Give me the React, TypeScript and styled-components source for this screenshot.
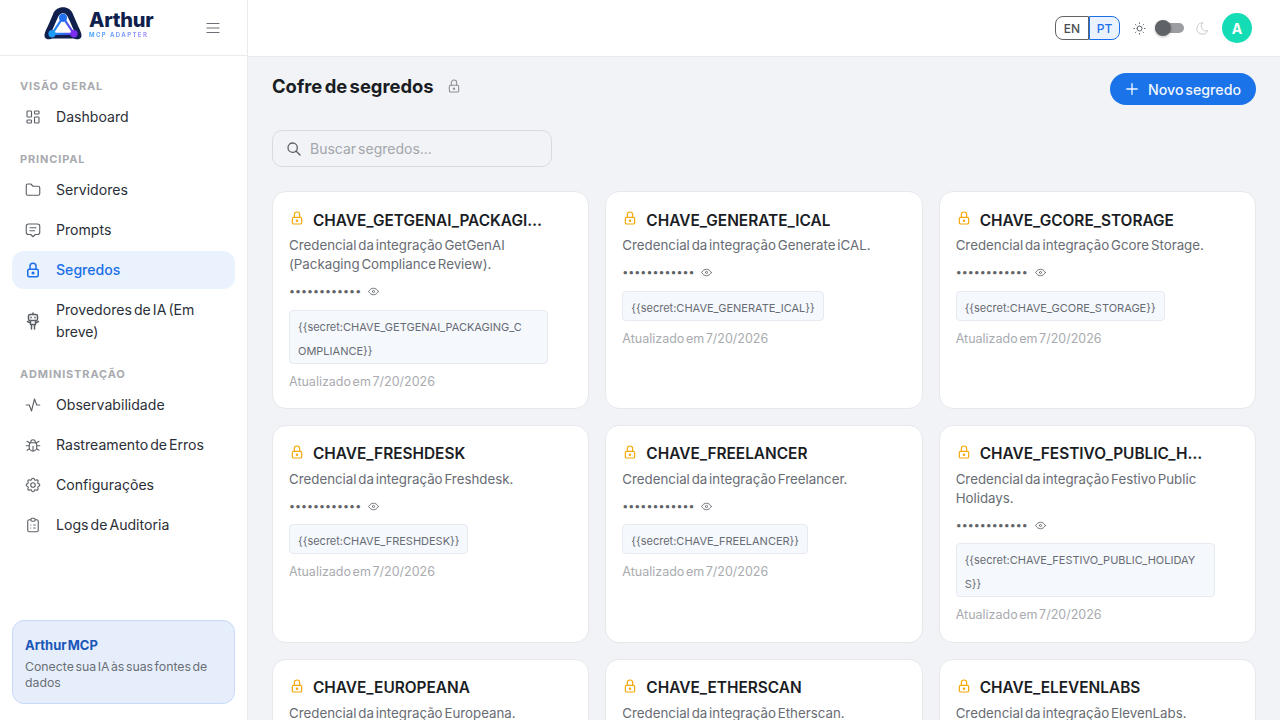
import styled, { createGlobalStyle } from 'styled-components';
import {
  TbActivity,
  TbBug,
  TbClipboardList,
  TbEye,
  TbFolder,
  TbLayoutDashboard,
  TbLock,
  TbMenu2,
  TbMessage2,
  TbMoon,
  TbPlus,
  TbSearch,
  TbSettings,
  TbSun,
} from 'react-icons/tb';

const GlobalStyle = createGlobalStyle`
  html, body {
    margin: 0;
    height: 100%;
    overflow: hidden;
  }
  body {
    font-family: Inter, "Noto Sans", sans-serif;
    word-spacing: -0.12em;
    color: #1f2430;
  }
  * {
    box-sizing: border-box;
  }
`;

// the tabler robot has no limbs, this one is drawn to match
const RobotIcon = () => (
  <svg width="18" height="18" viewBox="0 0 18 18" fill="none" stroke="currentColor" strokeWidth="1.3">
    <path d="M9 1v1.5" strokeLinecap="round" />
    <rect x="4.5" y="2.5" width="9" height="6" rx="1.6" />
    <path d="M7 5.2v.6M11 5.2v.6" strokeLinecap="round" />
    <path d="M6.5 8.5v4h5v-4M3.5 9.5l3 1.5M14.5 9.5l-3 1.5M7.5 12.5V17M10.5 12.5V17" strokeLinecap="round" />
  </svg>
);

const navGroups = [
  {
    title: 'VISÃO GERAL',
    items: [{ icon: <TbLayoutDashboard />, label: 'Dashboard' }],
  },
  {
    title: 'PRINCIPAL',
    items: [
      { icon: <TbFolder />, label: 'Servidores' },
      { icon: <TbMessage2 />, label: 'Prompts' },
      { icon: <TbLock />, label: 'Segredos', active: true },
      { icon: <RobotIcon />, label: 'Provedores de IA (Em breve)' },
    ],
  },
  {
    title: 'ADMINISTRAÇÃO',
    items: [
      { icon: <TbActivity />, label: 'Observabilidade' },
      { icon: <TbBug />, label: 'Rastreamento de Erros' },
      { icon: <TbSettings />, label: 'Configurações' },
      { icon: <TbClipboardList />, label: 'Logs de Auditoria' },
    ],
  },
];

const secrets = [
  { name: 'CHAVE_GETGENAI_PACKAGING_COMPLIANCE', desc: 'Credencial da integração GetGenAI (Packaging Compliance Review).' },
  { name: 'CHAVE_GENERATE_ICAL', desc: 'Credencial da integração Generate iCAL.' },
  { name: 'CHAVE_GCORE_STORAGE', desc: 'Credencial da integração Gcore Storage.' },
  { name: 'CHAVE_FRESHDESK', desc: 'Credencial da integração Freshdesk.' },
  { name: 'CHAVE_FREELANCER', desc: 'Credencial da integração Freelancer.' },
  { name: 'CHAVE_FESTIVO_PUBLIC_HOLIDAYS', desc: 'Credencial da integração Festivo Public Holidays.' },
  { name: 'CHAVE_EUROPEANA', desc: 'Credencial da integração Europeana.' },
  { name: 'CHAVE_ETHERSCAN', desc: 'Credencial da integração Etherscan.' },
  { name: 'CHAVE_ELEVENLABS', desc: 'Credencial da integração ElevenLabs.' },
];

const Logo = () => (
  <svg width="38" height="33" viewBox="0 0 38 32" fill="none" preserveAspectRatio="none">
    <defs>
      <linearGradient id="tri" x1="6" y1="24" x2="32" y2="24" gradientUnits="userSpaceOnUse">
        <stop offset="0" stopColor="#1e9bf5" />
        <stop offset="0.5" stopColor="#2f6df0" />
        <stop offset="1" stopColor="#7c2df0" />
      </linearGradient>
    </defs>
    <path
      d="M0.5 28 C0.5 24 3 21 5 16 L9 7 C12 -2 26 -2 29 7 L33 16 C35 21 37.500 24 37.500 28 C37.500 31.500 32 32 29.500 30.500 L8.500 30.500 C6 32 0.500 31.500 0.500 28Z"
      fill="#101f4d"
    />
    <path d="M19 6 C15.500 6 14.500 9 12.500 13 L8 23 L30 23 L25.500 13 C23.500 9 22.500 6 19 6Z" fill="#fff" />
    <path d="M19 10 L8 26 L30 26Z" stroke="url(#tri)" strokeWidth="2.2" fill="#fff" strokeLinejoin="round" />
    <circle cx="19" cy="10.5" r="4" fill="#2170f2" />
    <circle cx="8" cy="26" r="3.6" fill="#1e9bf5" />
    <circle cx="30" cy="26" r="3.6" fill="#7c2df0" />
  </svg>
);

const Sidebar = () => (
  <Side>
    <Brand>
      <BrandMark>
        <Logo />
        <BrandText>
          <BrandName>Arthur</BrandName>
          <BrandSub>MCP ADAPTER</BrandSub>
        </BrandText>
      </BrandMark>
      <MenuButton>
        <TbMenu2 />
      </MenuButton>
    </Brand>
    <Nav>
      {navGroups.map((group) => (
        <div key={group.title}>
          <GroupTitle>{group.title}</GroupTitle>
          {group.items.map((item) => (
            <NavItem key={item.label} $active={item.active}>
              <NavIcon $active={item.active}>{item.icon}</NavIcon>
              <span>{item.label}</span>
            </NavItem>
          ))}
        </div>
      ))}
    </Nav>
    <Promo>
      <PromoTitle>Arthur MCP</PromoTitle>
      <PromoText>Conecte sua IA às suas fontes de dados</PromoText>
    </Promo>
  </Side>
);

const SecretCard = ({ name, desc }: { name: string; desc: string }) => (
  <Card>
    <CardHead>
      <AmberLock>
        <TbLock />
      </AmberLock>
      <CardTitle>{name}</CardTitle>
    </CardHead>
    <CardDesc>{desc}</CardDesc>
    <MaskRow>
      <Dots>••••••••••••</Dots>
      <TbEye />
    </MaskRow>
    <Chip $long={name.length > 24}>{`{{secret:${name}}}`}</Chip>
    <Updated>Atualizado em 7/20/2026</Updated>
  </Card>
);

export default function App() {
  return (
    <>
      <GlobalStyle />
      <Shell>
        <Sidebar />
        <Body>
          <TopBar>
            <LangGroup>
              <LangButton>EN</LangButton>
              <LangButton $active>PT</LangButton>
            </LangGroup>
            <ThemeIcon>
              <TbSun />
            </ThemeIcon>
            <Toggle>
              <Thumb />
            </Toggle>
            <ThemeIcon $muted>
              <TbMoon />
            </ThemeIcon>
            <Avatar>A</Avatar>
          </TopBar>
          <Content>
            <PageHead>
              <PageTitle>
                Cofre de segredos
                <TitleIcon>
                  <TbLock />
                </TitleIcon>
              </PageTitle>
              <NewButton>
                <TbPlus />
                Novo segredo
              </NewButton>
            </PageHead>
            <SearchBox>
              <TbSearch />
              <SearchInput placeholder="Buscar segredos..." />
            </SearchBox>
            <Grid>
              {secrets.map((s) => (
                <SecretCard key={s.name} name={s.name} desc={s.desc} />
              ))}
            </Grid>
          </Content>
        </Body>
      </Shell>
    </>
  );
}

const Shell = styled.div`
  display: flex;
  height: 100vh;
  overflow: hidden;
`;

const Side = styled.aside`
  width: 248px;
  flex-shrink: 0;
  display: flex;
  flex-direction: column;
  background: #fff;
  border-right: 1px solid #e9ebef;
`;

const Brand = styled.div`
  height: 56px;
  flex-shrink: 0;
  display: flex;
  align-items: center;
  justify-content: space-between;
  padding: 0 25px 0 44px;
  border-bottom: 1px solid #e9ebef;
`;

const BrandMark = styled.div`
  display: flex;
  align-items: center;
  gap: 7px;
  margin-top: -8px;
`;

const BrandText = styled.div`
  display: flex;
  flex-direction: column;
`;

const BrandName = styled.div`
  font-size: 20px;
  line-height: 22px;
  font-weight: 800;
  color: #101f4d;
  letter-spacing: -0.2px;
`;

const BrandSub = styled.div`
  font-size: 6px;
  line-height: 7px;
  font-weight: 700;
  letter-spacing: 1.4px;
  word-spacing: 0;
  background: linear-gradient(90deg, #3ea2f7, #a78bfa);
  background-clip: text;
  -webkit-background-clip: text;
  color: transparent;
`;

const MenuButton = styled.div`
  display: flex;
  font-size: 18px;
  color: #6b6f76;

  svg {
    stroke-width: 1.6;
  }
`;

const Nav = styled.nav`
  padding: 9px 12px 0;
`;

const GroupTitle = styled.div`
  padding: 13px 8px 3px;
  height: 33px;
  font-size: 11px;
  line-height: 17px;
  font-weight: 700;
  letter-spacing: 0.85px;
  word-spacing: 0;
  color: #a8aaae;
`;

const NavItem = styled.div<{ $active?: boolean }>`
  display: flex;
  align-items: center;
  margin-bottom: 2px;
  padding: 8px 12px;
  border-radius: 12px;
  font-size: 14.1px;
  line-height: 22px;
  font-weight: ${(p) => (p.$active ? 500 : 400)};
  color: ${(p) => (p.$active ? '#1c6fe8' : '#2b2f38')};
  background: ${(p) => (p.$active ? '#eaf2fd' : 'transparent')};
`;

const NavIcon = styled.span<{ $active?: boolean }>`
  display: flex;
  flex-shrink: 0;
  width: 32px;
  font-size: 18px;
  color: ${(p) => (p.$active ? '#1c6fe8' : '#5c6066')};

  svg {
    stroke-width: ${(p) => (p.$active ? 2 : 1.5)};
  }
`;

const Promo = styled.div`
  margin: auto 12px 16px;
  padding: 14px 12px 12px;
  height: 84px;
  border: 1px solid #c9daf8;
  border-radius: 12px;
  background: #e6eefc;
`;

const PromoTitle = styled.div`
  font-size: 13px;
  line-height: 20px;
  font-weight: 700;
  color: #1a56b8;
`;

const PromoText = styled.div`
  margin-top: 4px;
  font-size: 12.3px;
  line-height: 16px;
  color: #6b6f76;
`;

const Body = styled.div`
  flex: 1;
  min-width: 0;
  display: flex;
  flex-direction: column;
  background: #f1f3f6;
`;

const TopBar = styled.header`
  height: 57px;
  flex-shrink: 0;
  display: flex;
  align-items: center;
  justify-content: flex-end;
  padding: 0 28px 0 0;
  background: #fff;
  border-bottom: 1px solid #e9ebef;
`;

const LangGroup = styled.div`
  display: flex;
  margin-right: 12px;
`;

const LangButton = styled.div<{ $active?: boolean }>`
  width: ${(p) => (p.$active ? '31px' : '34px')};
  height: 24px;
  display: flex;
  align-items: center;
  justify-content: center;
  font-size: 12px;
  font-weight: 500;
  color: ${(p) => (p.$active ? '#1c6fe8' : '#4a4e55')};
  background: ${(p) => (p.$active ? '#eaf2fd' : '#fff')};
  border: 1px solid ${(p) => (p.$active ? '#1c6fe8' : '#5f6368')};
  border-radius: ${(p) => (p.$active ? '0 8px 8px 0' : '8px 0 0 8px')};
`;

const ThemeIcon = styled.span<{ $muted?: boolean }>`
  display: flex;
  font-size: 15px;
  color: ${(p) => (p.$muted ? '#c9cbcf' : '#5f6368')};

  svg {
    stroke-width: 1.6;
  }
`;

const Toggle = styled.div`
  position: relative;
  width: 29px;
  height: 10px;
  margin: 0 11px 0 8px;
  border-radius: 5px;
  background: #9b9da1;
`;

const Thumb = styled.div`
  position: absolute;
  left: 0;
  top: -3px;
  width: 16px;
  height: 16px;
  border-radius: 50%;
  background: #5f6368;
  box-shadow: 0 1px 3px rgba(0, 0, 0, 0.25);
`;

const Avatar = styled.div`
  width: 30px;
  height: 30px;
  margin-left: 12px;
  display: flex;
  align-items: center;
  justify-content: center;
  border-radius: 50%;
  background: #14dcb4;
  color: #fff;
  font-size: 14px;
  font-weight: 700;
`;

const Content = styled.main`
  padding: 16px 24px 24px;
`;

const PageHead = styled.div`
  display: flex;
  justify-content: space-between;
  align-items: flex-start;
  height: 57px;
`;

const PageTitle = styled.h1`
  margin: 0;
  display: flex;
  align-items: center;
  height: 26px;
  font-size: 18.4px;
  font-weight: 700;
  color: #1a1d24;
`;

const TitleIcon = styled.span`
  display: flex;
  margin-left: 12px;
  font-size: 16px;
  color: #8c8f94;

  svg {
    stroke-width: 1.6;
  }
`;

const NewButton = styled.button`
  height: 32px;
  width: 146px;
  display: flex;
  align-items: center;
  gap: 7px;
  padding: 0 13px;
  border: none;
  border-radius: 16px;
  background: #1a73e8;
  color: #f1f6fe;
  font-family: inherit;
  font-size: 14.2px;
  font-weight: 500;
  word-spacing: inherit;

  svg {
    font-size: 18px;
    stroke-width: 1.8;
  }
`;

const SearchBox = styled.label`
  width: 280px;
  height: 37px;
  display: flex;
  align-items: center;
  gap: 8px;
  padding: 0 13px;
  border: 1px solid #d9dbdf;
  border-radius: 10px;
  color: #5f6368;
  font-size: 16px;

  svg {
    flex-shrink: 0;
  }
`;

const SearchInput = styled.input`
  flex: 1;
  min-width: 0;
  padding: 0;
  border: none;
  outline: none;
  background: transparent;
  font-family: inherit;
  font-size: 14px;
  word-spacing: inherit;

  &::placeholder {
    color: #a3a6ab;
    opacity: 1;
  }
`;

const Grid = styled.div`
  margin-top: 24px;
  display: grid;
  grid-template-columns: repeat(3, 1fr);
  gap: 16px;
`;

const Card = styled.article`
  min-width: 0;
  padding: 16px 16px 17.2px;
  border: 1px solid #e6e8ec;
  border-radius: 14px;
  background: #fff;
`;

const CardHead = styled.div`
  display: flex;
  height: 24px;
  align-items: center;
`;

const AmberLock = styled.span`
  display: flex;
  width: 24px;
  margin-top: -4px;
  font-size: 16px;
  color: #f5a90a;

  svg {
    stroke-width: 1.8;
  }
`;

const CardTitle = styled.h3`
  margin: 0;
  max-width: 232px;
  overflow: hidden;
  white-space: nowrap;
  text-overflow: ellipsis;
  font-size: 15.4px;
  font-weight: 600;
  color: #1a1d24;
`;

const CardDesc = styled.p`
  margin: 4px 0 0;
  font-size: 13.3px;
  line-height: 19px;
  color: #686c73;
`;

const MaskRow = styled.div`
  display: flex;
  align-items: center;
  gap: 6px;
  height: 20px;
  margin-top: 7.6px;
  color: #5f6368;
  font-size: 13px;

  svg {
    stroke-width: 1.6;
  }
`;

const Dots = styled.span`
  font-size: 10.7px;
  color: #5f6368;
`;

const Chip = styled.div<{ $long?: boolean }>`
  width: ${(p) => (p.$long ? '259px' : 'fit-content')};
  margin-top: 8px;
  padding: 4px ${(p) => (p.$long ? '17px' : '8px')} 0 8px;
  border: 1px solid #e7eaf0;
  border-radius: 4px;
  background: #f5f8fd;
  font-size: 11px;
  line-height: 24px;
  color: #686c73;
  word-break: break-all;
`;

const Updated = styled.div`
  margin-top: 9px;
  font-size: 12.5px;
  line-height: 18px;
  color: #a9abb0;
`;
